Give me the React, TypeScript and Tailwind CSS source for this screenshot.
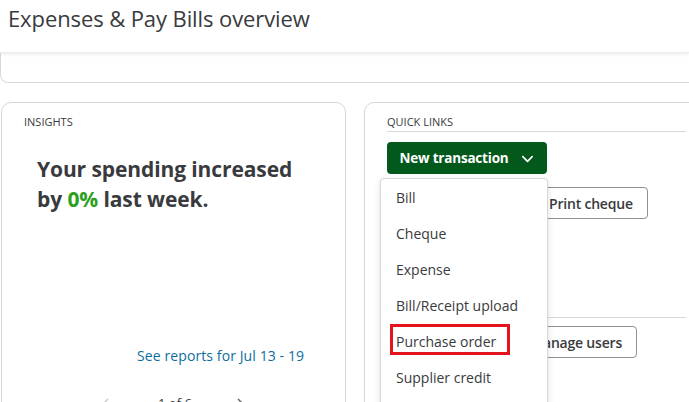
import React from "react";

const font = { fontFamily: '"Open Sans", "Noto Sans", Arial, sans-serif' };

function Chevron({ className }: { className?: string }) {
  return (
    <svg viewBox="0 0 16 16" className={className} fill="none" stroke="currentColor" strokeWidth="1.8" strokeLinecap="round" strokeLinejoin="round">
      <path d="M3 6l5 5 5-5" />
    </svg>
  );
}

export default function App() {
  const items = ["Bill", "Cheque", "Expense", "Bill/Receipt upload", "Purchase order", "Supplier credit", "Pay down credit card"];
  return (
    <div className="relative w-[689px] h-[402px] overflow-hidden bg-white text-[#393a3d]" style={font}>
      {/* Header */}
      <div className="relative z-10 h-[53px] bg-white shadow-[0_2px_3px_rgba(0,0,0,0.06)] border-b border-[#ececec] pl-[8px] pt-[3px]">
        <h1 className="text-[22px] leading-[30px] font-medium text-[#393a3d] tracking-[-0.1px]">Expenses &amp; Pay Bills overview</h1>
      </div>
      {/* Top card remnant */}
      <div className="w-[720px] h-[30px] border-x border-b border-[#d6d8db] rounded-b-[8px] bg-white" />

      {/* Cards row */}
      <div className="flex mt-[19px] gap-[18px] pl-[1px]">
        {/* Insights */}
        <div className="w-[345px] h-[320px] shrink-0 border border-[#d6d8db] rounded-t-[10px] pl-[22px] pt-[11px] flex flex-col">
          <div className="text-[11px] leading-[15px] uppercase">Insights</div>
          <div className="mt-[25px] ml-[13px] text-[21px] leading-[30px] font-bold text-[#393a3d] tracking-[-0.1px]">
            Your spending increased
            <br />
            by <span className="text-[#2ca01c]">0%</span> last week.
          </div>
          <div className="mt-[133px] ml-[113px] text-[14px] leading-[18px] text-[#0d6e9e] tracking-[0.1px]">See reports for Jul 13 - 19</div>
          <div className="mt-[29px] ml-[74px] flex items-center text-[13px] text-[#393a3d]">
            <svg viewBox="0 0 16 16" className="w-[16px] h-[16px] text-[#c9cbcf]" fill="none" stroke="currentColor" strokeWidth="1.5"><path d="M10 3L5 8l5 5" /></svg>
            <span className="ml-[44px]">1 of 6</span>
            <svg viewBox="0 0 16 16" className="ml-[40px] w-[16px] h-[16px] text-[#6b6c72]" fill="none" stroke="currentColor" strokeWidth="1.5"><path d="M6 3l5 5-5 5" /></svg>
          </div>
        </div>

        {/* Quick links */}
        <div className="relative w-[400px] h-[320px] shrink-0 border border-[#d6d8db] rounded-t-[10px] pl-[22px] pt-[11px]">
          <div className="w-[299px] border-b border-[#d6d8db] pb-[2px] text-[11px] leading-[15px] uppercase">Quick links</div>
          <button className="mt-[10px] w-[160px] h-[32px] rounded-[4px] bg-[#03581c] text-white text-[13.5px] font-bold flex items-center justify-center gap-[11px] tracking-[-0.2px]">
            New transaction
            <Chevron className="w-[15px] h-[15px]" />
          </button>
          <div className="mt-[13px] flex">
            <div className="w-[147px]" />
            <button className="h-[32px] pl-[14px] pr-[14px] rounded-[4px] border border-[#8d9096] text-[14px] font-semibold flex items-center tracking-[-0.2px]">Print cheque</button>
          </div>
          <div className="mt-[98px] ml-[161px] w-[138px] border-b border-[#d6d8db]" />
          <div className="mt-[8px] flex">
            <div className="w-[130px]" />
            <button className="h-[32px] w-[120px] pr-[14px] rounded-[4px] border border-[#8d9096] text-[14px] font-semibold flex items-center justify-end tracking-[-0.2px]">Manage users</button>
          </div>

          {/* Dropdown */}
          <div className="absolute left-[15px] top-[75px] w-[168px] h-[260px] bg-white border border-[#d6d8db] rounded-[4px] shadow-[0_2px_6px_rgba(0,0,0,0.12)] z-20">
            {items.map((it) => (
              <div key={it} className="relative h-[36px] pl-[15px] flex items-center text-[14px] text-[#393a3d]">
                {it}
                {it === "Purchase order" && (
                  <div className="absolute left-[9px] top-[1px] w-[120px] h-[31px] border-[3px] border-[#e3141c]" />
                )}
              </div>
            ))}
          </div>
        </div>
      </div>
    </div>
  );
}
